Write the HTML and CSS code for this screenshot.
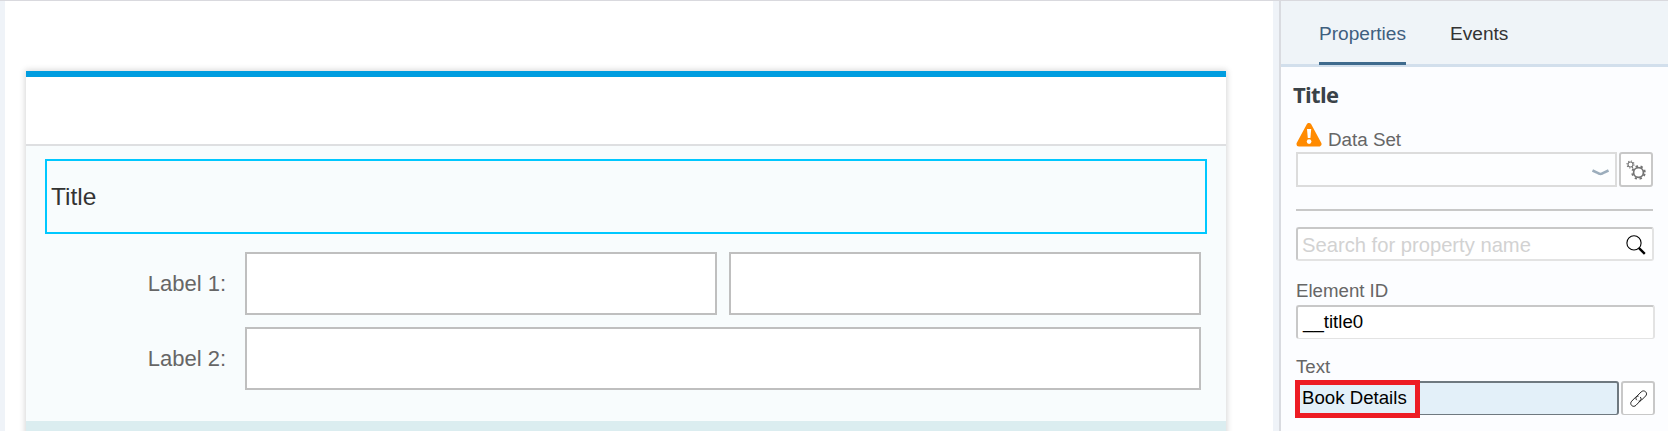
FILE: index.html
```html
<!DOCTYPE html>
<html lang="en">
<head>
<meta charset="utf-8">
<title>Layout Editor</title>
<link rel="stylesheet" href="styles.css">
</head>
<body>
<div class="editor">
  <main class="canvas">
    <section class="card">
      <header class="card-header"></header>
      <div class="card-body">
        <div class="form-title">Title</div>
        <div class="form">
          <div class="form-row"><span class="form-label">Label 1:</span><div class="field"></div><div class="field"></div></div>
          <div class="form-row"><span class="form-label">Label 2:</span><div class="field"></div></div>
        </div>
      </div>
      <footer class="card-footer"></footer>
    </section>
  </main>
  <aside class="panel">
    <nav class="tabs">
      <span class="tab tab-active">Properties</span>
      <span class="tab">Events</span>
    </nav>
    <div class="props">
      <h2 class="heading">Title</h2>
      <div class="dataset-label">
        <svg class="warning" width="26" height="24" viewBox="0 0 26 24">
          <path d="M13 2.500 23 21H3Z" fill="#ff8a00" stroke="#ff8a00" stroke-width="5" stroke-linejoin="round"/>
          <path d="M11 6h4.200l-.8 9h-2.600Z" fill="#fff"/>
          <circle cx="13.100" cy="18.600" r="2.300" fill="#fff"/>
        </svg>
        <span class="label">Data Set</span>
      </div>
      <div class="dataset-row">
        <div class="select">
          <svg width="17" height="8" viewBox="0 0 17 8"><path d="M.5 1.500 5 3.600Q8.500 6.400 12 3.600L16.500 1.500" fill="none" stroke="#9cadbc" stroke-width="2.500"/></svg>
        </div>
        <div class="button gear-button">
          <svg width="20" height="20" viewBox="0 0 20 20" fill="none" stroke="#747474">
            <circle cx="4.500" cy="4.500" r="2.500" stroke-width="1.100"/>
            <circle cx="4.500" cy="4.500" r="3.500" stroke-width="1.200" stroke-dasharray="1.100 1.649"/>
            <circle cx="12.500" cy="12.500" r="4.900" stroke-width="1.700"/>
            <circle cx="12.500" cy="12.500" r="6.300" stroke-width="1.900" stroke-dasharray="2.300 2.648" transform="rotate(12 12.500 12.500)"/>
          </svg>
        </div>
      </div>
      <div class="divider"></div>
      <div class="input search">
        <span>Search for property name</span>
        <svg width="20" height="20" viewBox="0 0 20 20" fill="none" stroke="#000"><circle cx="8" cy="7.900" r="7.100" stroke-width="1.100"/><path d="m12.800 12.800 6 6" stroke-width="2.400"/></svg>
      </div>
      <div class="label element-label">Element ID</div>
      <div class="input element-input">__title0</div>
      <div class="label text-label">Text</div>
      <div class="text-row">
        <div class="input text-input">Book Details</div>
        <div class="button link-button">
          <svg width="18" height="18" viewBox="0 0 18 18" fill="none" stroke="#222" stroke-width="1">
            <path d="M6.800 10.200C5.600 9 5.600 7.500 6.800 6.300L11.200 1.900C12.500.6 14.200.6 15.500 1.700C16.900 3 16.900 4.700 15.600 6L11.600 10C10.700 10.900 9.800 11.100 8.700 11"/>
            <path d="M10.200 7C11.400 8.200 11.400 9.700 10.200 10.900L6 15.300C4.700 16.600 3 16.700 1.700 15.500C.4 14.200.4 12.500 1.700 11.200L5.600 7.200C6.500 6.300 7.400 6.100 8.500 6.200"/>
          </svg>
        </div>
        <div class="highlight"></div>
      </div>
    </div>
  </aside>
</div>
</body>
</html>
```
FILE: styles.css
```css
* { box-sizing: border-box; }
body { margin: 0; font-family: "Liberation Sans", Arial, sans-serif; }
svg { display: block; flex: none; }
.editor {
  display: flex;
  height: 431px;
  overflow: hidden;
  border-top: 1px solid #d9d9de;
  background: #eff3f8;
  padding-left: 5px;
}
.canvas { width: 1268px; margin-right: 6px; padding: 70px 47px 0 21px; background: #fff; flex: none; overflow: hidden; }
.card { height: 400px; border-top: 6px solid #009de0; box-shadow: 0 0 6px 1px rgba(0, 0, 0, .16); background: #fff; }
.card-header { height: 69px; border-bottom: 2px solid #dedfe1; }
.card-body { height: 275px; padding: 13px 19px 0; background: #f8fcfd; }
.form-title {
  height: 75px;
  border: 2px solid #00c8ff;
  padding-left: 4px;
  font-size: 24.500px;
  line-height: 71px;
  color: #333;
}
.form { display: flex; flex-direction: column; gap: 12px; padding: 18px 6px 0 0; }
.form-row { display: flex; gap: 12px; height: 63px; }
.form-label { width: 188px; padding-right: 7px; text-align: right; font-size: 22px; line-height: 64px; color: #666; }
.field { flex: 1; border: 2px solid #bfbfbf; background: #fff; }
.card-footer { height: 50px; background: #dbedf0; }

.panel { flex: 1; border-left: 2px solid #d9dbe0; background: #fcfdff; }
.tabs { display: flex; gap: 44px; height: 66px; padding-left: 38px; border-bottom: 3px solid #d2dfec; background: #eff4f8; }
.tab { height: 64px; font-size: 19.100px; line-height: 65px; color: #333; }
.tab-active { border-bottom: 3px solid #3f6b8e; color: #3f5f7f; }
.props { padding: 12px 13px 0 15px; font-size: 18.670px; }
.heading { margin: 0 0 2px -3px; font: bold 22px/30px "Open Sans", "Noto Sans", sans-serif; letter-spacing: -.7px; color: #3a4248; }
.dataset-label { display: flex; gap: 6px; height: 41px; padding-top: 12px; }
.label { color: #666; line-height: 22px; }
.dataset-label .label { padding-top: 6px; font-size: 18.800px; }
.dataset-row { display: flex; gap: 2px; width: 357px; height: 35px; }
.select { flex: 1; display: flex; justify-content: flex-end; border: 2px solid #dcdcdc; padding: 15px 6px 0 0; background: #fdfeff; }
.button { width: 34px; border: 2px solid #c8c8c8; border-radius: 3px; background: #fff; }
.gear-button { padding: 6px 0 0 5px; }
.divider { width: 357px; height: 2px; margin: 22px 0 16px; background: #c8c8c8; }
.input {
  border: 2px solid #c8c8c8;
  border-right-color: #e3e3e3;
  border-bottom-color: #e3e3e3;
  border-radius: 3px;
  background: #fff;
  padding-left: 4px;
  color: #000;
}
.search { display: flex; justify-content: space-between; width: 358px; height: 34px; padding-right: 6px; font-size: 20.200px; line-height: 32px; color: #d2d2d2; }
.search svg { margin-top: 6px; }
.element-label { margin-top: 19px; }
.element-input { width: 359px; height: 34px; margin-top: 3px; padding-left: 5px; border-bottom-width: 1px; line-height: 29px; }
.text-label { margin-top: 17px; }
.text-row { position: relative; display: flex; gap: 2px; width: 359px; height: 34px; margin-top: 3px; }
.text-input { flex: 1; border-color: #6f7980; border-bottom-width: 1px; background: #e3f0f9; line-height: 29px; }
.link-button { padding: 7px 0 0 7px; border-bottom-width: 1px; }
.highlight { position: absolute; left: -1px; top: -1px; width: 125px; height: 38px; border: 5px solid #ed1c24; }
```
